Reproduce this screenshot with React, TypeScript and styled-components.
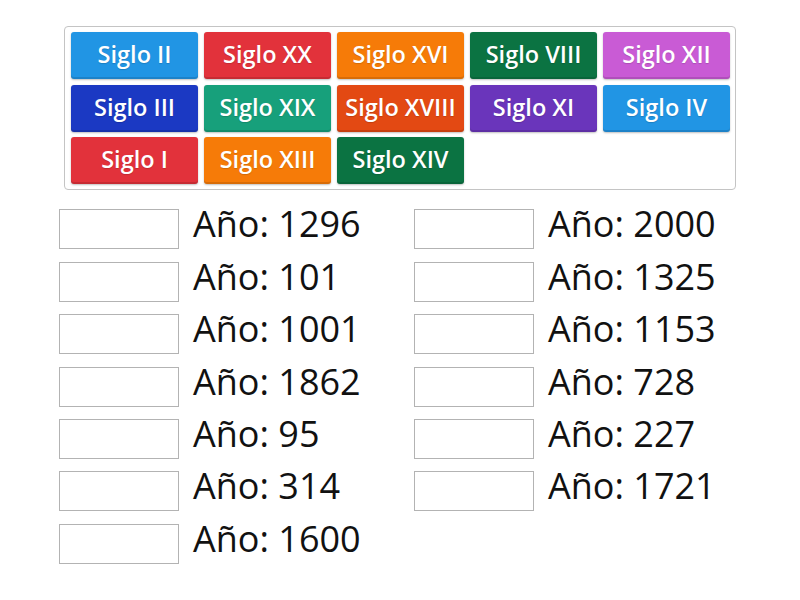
import React from "react";
import styled, { createGlobalStyle } from "styled-components";

const Global = createGlobalStyle`
  html, body { margin: 0; padding: 0; background: #fff; }
  body { font-family: "Open Sans", "Noto Sans", sans-serif; }
`;

const Page = styled.div`
  width: 800px;
  height: 600px;
  padding-top: 26px;
  box-sizing: border-box;
`;

const Bank = styled.div`
  margin-left: 64px;
  width: 659px;
  box-sizing: content-box;
  border: 1px solid #c4c4c4;
  border-radius: 4px;
  padding: 5px 5px 5px 6px;
  display: grid;
  grid-template-columns: repeat(5, 127px);
  grid-auto-rows: 47px;
  column-gap: 6px;
  row-gap: 5.7px;
`;

const Tile = styled.div<{ $bg: string }>`
  background: ${(p) => p.$bg};
  border-radius: 3px;
  color: #fff;
  font-family: "Open Sans", sans-serif;
  font-weight: 600;
  font-size: 23.5px;
  display: flex;
  align-items: center;
  justify-content: center;
  box-shadow: inset 0 -2px 0 rgba(0, 0, 0, 0.12), 0 1px 2px rgba(0, 0, 0, 0.25);
  text-shadow: 0 1px 1px rgba(0, 0, 0, 0.15);
  padding-bottom: 3px;
  box-sizing: border-box;
`;

const Targets = styled.div`
  margin: 19px 0 0 59px;
  display: grid;
  grid-template-columns: 355px 1fr;
  grid-auto-flow: column;
  grid-template-rows: repeat(7, 40px);
  row-gap: 12.4px;
`;

const Row = styled.div`
  display: flex;
  align-items: flex-start;
  gap: 14px;
`;

const Slot = styled.div`
  width: 120px;
  height: 40px;
  box-sizing: border-box;
  border: 1px solid #b3b3b3;
  flex: none;
`;

const Label = styled.div`
  font-family: "Open Sans", sans-serif;
  font-size: 36px;
  line-height: 30px;
  color: #111;
  white-space: nowrap;
`;

const tiles: [string, string][] = [
  ["Siglo II", "#2195e4"],
  ["Siglo XX", "#e2323b"],
  ["Siglo XVI", "#f67b08"],
  ["Siglo VIII", "#0b7342"],
  ["Siglo XII", "#c95bd5"],
  ["Siglo III", "#1b39c3"],
  ["Siglo XIX", "#17a07b"],
  ["Siglo XVIII", "#e34913"],
  ["Siglo XI", "#6a35bb"],
  ["Siglo IV", "#2195e4"],
  ["Siglo I", "#e2323b"],
  ["Siglo XIII", "#f67b08"],
  ["Siglo XIV", "#0b7342"],
];

const left = ["1296", "101", "1001", "1862", "95", "314", "1600"];
const right = ["2000", "1325", "1153", "728", "227", "1721"];

export default function App() {
  return (
    <Page>
      <Global />
      <Bank>
        {tiles.map(([t, c]) => (
          <Tile key={t} $bg={c}>
            {t}
          </Tile>
        ))}
      </Bank>
      <Targets>
        {left.map((y) => (
          <Row key={"l" + y}>
            <Slot />
            <Label>Año: {y}</Label>
          </Row>
        ))}
        {right.map((y) => (
          <Row key={"r" + y}>
            <Slot />
            <Label>Año: {y}</Label>
          </Row>
        ))}
      </Targets>
    </Page>
  );
}
